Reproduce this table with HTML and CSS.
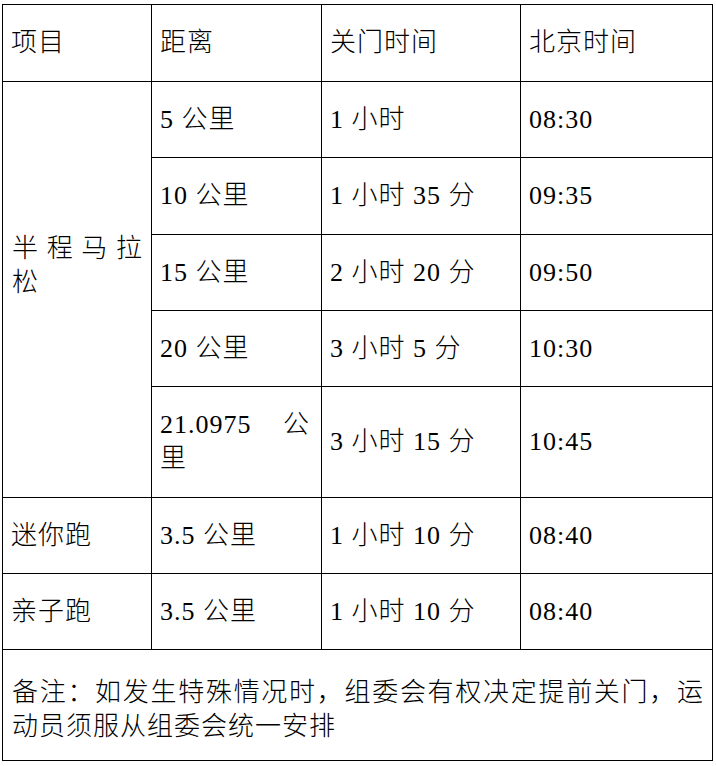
FILE: index.html
```html
<!DOCTYPE html>
<html lang="zh-CN">
<head>
<meta charset="utf-8">
<title>关门时间</title>
<link rel="stylesheet" href="styles.css">
</head>
<body>
<table class="cutoff">
  <colgroup>
    <col class="c1"><col class="c2"><col class="c3"><col class="c4">
  </colgroup>
  <tr class="h77">
    <td>项目</td><td>距离</td><td>关门时间</td><td>北京时间</td>
  </tr>
  <tr class="h76">
    <td rowspan="5" class="just lifted">半程马拉松</td>
    <td>5 公里</td><td>1 小时</td><td>08:30</td>
  </tr>
  <tr class="h77">
    <td>10 公里</td><td>1 小时 35 分</td><td>09:35</td>
  </tr>
  <tr class="h76">
    <td>15 公里</td><td>2 小时 20 分</td><td>09:50</td>
  </tr>
  <tr class="h76">
    <td>20 公里</td><td>3 小时 5 分</td><td>10:30</td>
  </tr>
  <tr class="h111">
    <td class="just narrow">21.0975 公里</td><td>3 小时 15 分</td><td>10:45</td>
  </tr>
  <tr class="h76">
    <td>迷你跑</td><td>3.5 公里</td><td>1 小时 10 分</td><td>08:40</td>
  </tr>
  <tr class="h76">
    <td>亲子跑</td><td>3.5 公里</td><td>1 小时 10 分</td><td>08:40</td>
  </tr>
  <tr class="h111">
    <td colspan="4" class="just note">备注：如发生特殊情况时，组委会有权决定提前关门，运动员须服从组委会统一安排</td>
  </tr>
</table>
</body>
</html>
```
FILE: styles.css
```css
html, body {
  margin: 0;
  padding: 0;
  background: #fff;
}
body {
  padding: 4px 0 0 2px;
}
.cutoff {
  border-collapse: collapse;
  table-layout: fixed;
  width: 710px;
  font-family: "Liberation Serif", "Noto Sans CJK SC", serif;
  font-weight: 300;
  font-size: 26px;
  letter-spacing: 1px;
  line-height: 34px;
  color: #000;
}
.c1 { width: 149px; }
.c2 { width: 170px; }
.c3 { width: 199px; }
.c4 { width: 192px; }
.cutoff td {
  border: 1px solid #000;
  padding: 0 8px 0 8px;
  vertical-align: middle;
  text-align: left;
}
.cutoff td.just {
  text-align: justify;
}
.cutoff td.lifted {
  padding-left: 9px;
  padding-bottom: 48px;
}
.cutoff td.narrow {
  padding-right: 11px;
}
.cutoff td.note {
  padding-left: 9px;
  padding-top: 10px;
}
.h77 { height: 77px; }
.h76 { height: 76px; }
.h111 { height: 111px; }
```
